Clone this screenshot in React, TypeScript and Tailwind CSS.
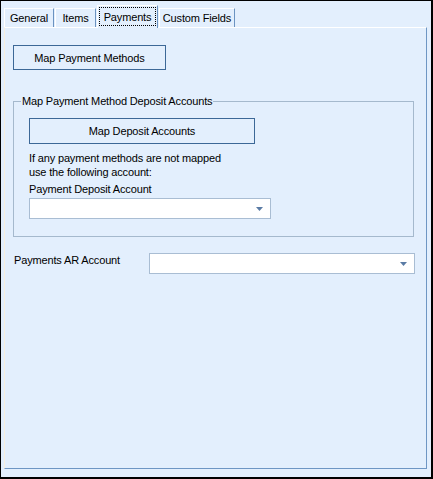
import React from "react";

const font = { fontFamily: '"Liberation Sans", Arial, sans-serif' };

function Arrow() {
  return (
    <svg width="7" height="4" viewBox="0 0 7 4" className="block">
      <path d="M0 0H7L3.5 4Z" fill="#5a7ba5" />
    </svg>
  );
}

function Combo({ w }: { w: string }) {
  return (
    <div className={`${w} h-[21px] bg-white border border-[#a9bdd3] flex items-center justify-end pr-[7px]`}>
      <Arrow />
    </div>
  );
}

export default function App() {
  return (
    <div
      className="w-[433px] h-[479px] border-l border-t border-r-2 border-b-2 border-black bg-[#e3effd] text-[11px] leading-[14px] text-black flex flex-col tracking-[-0.15px]"
      style={font}
    >
      {/* tabs */}
      <div className="h-[26px] flex items-end pl-[3px] relative z-10">
        <div className="w-[50px] h-[19px] border-t border-l border-white border-r border-r-[#6b93c1] flex items-center justify-center">
          General
        </div>
        <div className="ml-[1px] w-[41px] h-[19px] border-t border-l border-white border-r border-r-[#6b93c1] flex items-center justify-center">
          Items
        </div>
        <div className="ml-[1px] w-[61px] h-[23px] mb-[-1px] bg-[#e3effd] border-t border-l border-white border-r border-r-[#6b93c1] flex items-stretch p-[1px] pb-[2px]">
          <div className="flex-1 border border-dotted border-black flex items-center justify-center">
            Payments
          </div>
        </div>
        <div className="ml-[1px] w-[76px] h-[19px] border-t border-l border-white border-r border-r-[#6b93c1] flex items-center justify-center">
          Custom Fields
        </div>
      </div>

      {/* panel */}
      <div className="ml-[3px] w-[423px] h-[442px] border-t border-l border-t-white border-l-[#f6efe0] border-r border-b border-r-[#6e96c4] border-b-[#6e96c4] flex flex-col">
        <div className="mt-[17px] ml-[8px] w-[153px] h-[25px] border border-[#3c6897] flex items-center justify-center">
          Map Payment Methods
        </div>

        <fieldset className="mt-[24px] ml-[8px] w-[401px] h-[143px] border border-[#a5b9cd] pl-[15px] flex flex-col">
          <legend className="ml-[-8px] px-[1px]">Map Payment Method Deposit Accounts</legend>
          <div className="mt-[10px] w-[226px] h-[26px] border border-[#3c6897] flex items-center justify-center">
            Map Deposit Accounts
          </div>
          <div className="mt-[7px]">
            If any payment methods are not mapped
            <br />
            use the following account:
          </div>
          <div className="mt-[3px]">Payment Deposit Account</div>
          <div className="mt-[2px]">
            <Combo w="w-[242px]" />
          </div>
        </fieldset>

        <div className="mt-[16px] ml-[9px] flex items-start">
          <div className="w-[135px]">Payments AR Account</div>
          <Combo w="w-[266px]" />
        </div>
      </div>
    </div>
  );
}
